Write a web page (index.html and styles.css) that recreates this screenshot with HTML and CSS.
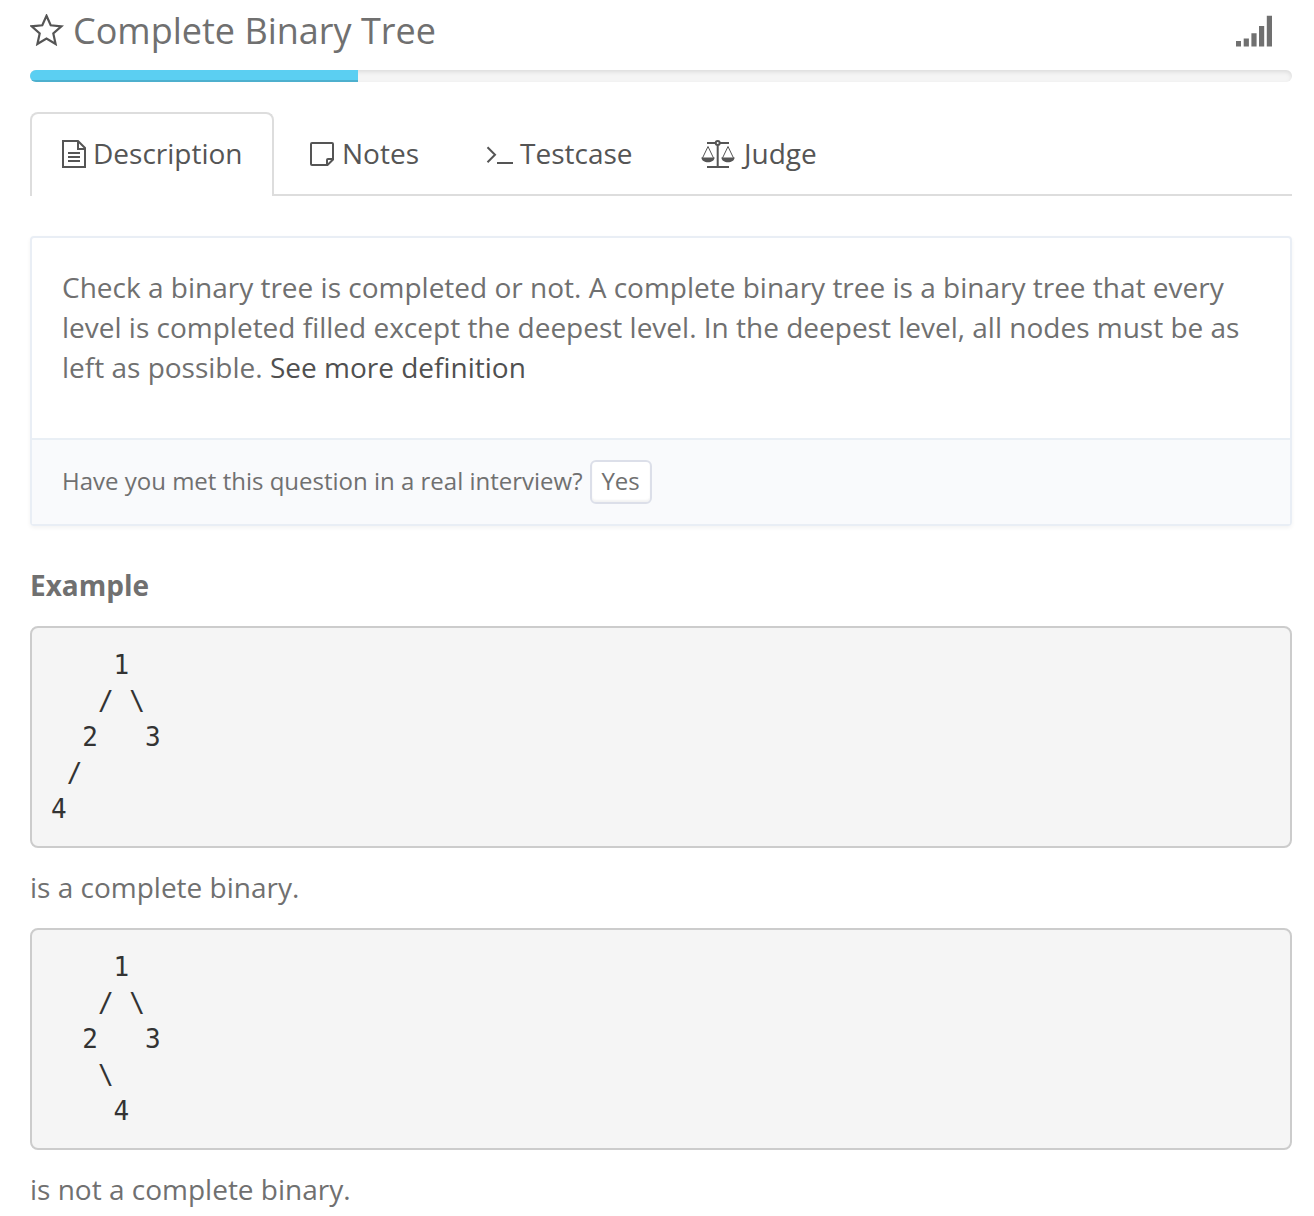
FILE: index.html
```html
<!DOCTYPE html>
<html lang="en">
<head>
<meta charset="utf-8">
<title>Complete Binary Tree</title>
<link rel="stylesheet" href="styles.css">
</head>
<body>
<main class="page">
  <header class="heading">
    <svg class="star" viewBox="0 0 34 32"><path d="M16.500 1.800 20.700 11.300 31.400 12.300 23.300 19.400 25.600 30 16.500 24.500 7.400 30 9.700 19.400 1.600 12.300 12.300 11.300Z"/></svg>
    <h1 class="title">Complete Binary Tree</h1>
    <svg class="signal" viewBox="0 0 36 32"><path d="M0 26h5v5.5H0zM7.7 23.5h5.2v8H7.7zM15.4 18.3h5.2v13.2h-5.2zM23 11h5.2v20.5H23zM30.8.7H36v30.8h-5.2z"/></svg>
  </header>
  <div class="progress"><div class="progress-bar" style="width: 26%"></div></div>

  <nav class="tabs">
    <a class="tab tab-active">
      <svg class="icon icon-doc" viewBox="0 0 24 28"><path d="M1 1H16L23 8V27H1ZM16 1V9H23M6 13H18M6 17H18M6 21H18"/></svg>
      <span class="label">Description</span>
    </a>
    <a class="tab tab-notes">
      <svg class="icon icon-note" viewBox="0 0 24 24"><path d="M2 1H22Q23 1 23 2V17.500L17.500 23H2Q1 23 1 22V2Q1 1 2 1ZM17 23V18Q17 17 18 17H23"/></svg>
      <span class="label">Notes</span>
    </a>
    <a class="tab tab-testcase">
      <svg class="icon icon-terminal" viewBox="0 0 27 18"><path d="M1.5 1.2 9 8.7 1.5 16.2M11 16.9H27"/></svg>
      <span class="label">Testcase</span>
    </a>
    <a class="tab tab-judge">
      <svg class="icon icon-scales" viewBox="0 0 34 28"><path d="M6 3H14.4M19 3H28M16.7 5.2V27M6 27H28"/><circle cx="16.7" cy="3" r="2"/><path class="thin" d="M1.5 18 7 6.5 12.500 18M21.500 18 27 6.500 32.500 18"/><path class="pan" d="M.3 17.500H13.700C13.300 20.600 10.500 22.300 7 22.300S.7 20.600.3 17.500ZM20.300 17.500H33.700C33.300 20.600 30.500 22.300 27 22.300S20.700 20.600 20.300 17.500Z"/></svg>
      <span class="label">Judge</span>
    </a>
  </nav>

  <section class="panel">
    <div class="panel-body">
      <p class="text">Check a binary tree is completed or not. A complete binary tree is a binary tree that every level is completed filled except the deepest level. In the deepest level, all nodes must be as left as possible. <a class="link">See more definition</a></p>
    </div>
    <div class="panel-footer">
      <span class="question">Have you met this question in a real interview?</span>
      <button class="button" type="button">Yes</button>
    </div>
  </section>

  <section class="example">
    <h2 class="subtitle">Example</h2>
    <pre class="code">    1
   / \
  2   3
 /
4</pre>
    <p class="text">is a complete binary.</p>
    <pre class="code">    1
   / \
  2   3
   \
    4</pre>
    <p class="text">is not a complete binary.</p>
  </section>
</main>
</body>
</html>
```

FILE: styles.css
```css
* {
  box-sizing: border-box;
}

body {
  margin: 0;
  background: #fff;
  color: #707070;
  font-family: "Open Sans", sans-serif;
  font-size: 28px;
  line-height: 40px;
}

.page {
  padding: 0 22px 0 30px;
}

.heading {
  display: flex;
  align-items: flex-start;
  height: 70px;
}

.star {
  width: 34px;
  height: 32px;
  margin-top: 14px;
  fill: none;
  stroke: #555;
  stroke-width: 2.2;
}

.title {
  flex: 1;
  margin: 6px 0 0 9px;
  font-size: 36px;
  font-weight: 400;
  line-height: 50px;
  white-space: nowrap;
}

.signal {
  width: 36px;
  height: 32px;
  margin: 15px 20px 0 0;
  fill: #707070;
}

.progress {
  height: 12px;
  overflow: hidden;
  border-radius: 6px;
  background: #f5f5f5;
  box-shadow: inset 0 2px 4px rgba(0, 0, 0, 0.1);
}

.progress-bar {
  height: 100%;
  background: #5bcff2;
  box-shadow: inset 0 -2px 0 rgba(0, 0, 0, 0.15);
}

.tabs {
  display: flex;
  height: 84px;
  margin-top: 30px;
  border-bottom: 2px solid #ddd;
  color: #555;
}

.tab {
  display: flex;
  align-items: center;
  height: 84px;
  border: 2px solid transparent;
  border-bottom: 0;
  white-space: nowrap;
}

.tab-active {
  width: 244px;
  padding-left: 30px;
  border-color: #ddd;
  border-radius: 8px 8px 0 0;
  background: #fff;
}

.tab-notes {
  width: 176px;
  padding-left: 34px;
}

.tab-testcase {
  width: 214px;
  padding-left: 34px;
}

.tab-judge {
  padding-left: 35px;
}

.icon {
  flex: none;
  fill: none;
  stroke: #555;
  stroke-width: 2;
}

.label {
  margin-top: -5px;
}

.icon-doc {
  width: 24px;
  height: 28px;
  margin: -2px 7px 0 0;
}

.icon-note {
  width: 24px;
  height: 24px;
  margin: -2px 8px 0 0;
}

.icon-terminal {
  width: 27px;
  height: 18px;
  margin: 0 7px 0 0;
}

.icon-scales {
  width: 34px;
  height: 28px;
  margin: -2px 9px 0 0;
}

.thin {
  stroke-width: 1;
}

.pan {
  fill: #555;
  stroke: none;
}

.panel {
  margin-top: 40px;
  border: 2px solid #e9eef5;
  border-radius: 4px;
  box-shadow: 0 2px 4px rgba(0, 0, 0, 0.05);
}

.panel-body {
  padding: 29px 30px 51px;
}

.text {
  margin: 0;
}

.link {
  color: #505050;
}

.panel-footer {
  display: flex;
  align-items: center;
  gap: 7px;
  height: 86px;
  padding: 0 30px;
  border-top: 2px solid #e9eff5;
  background: #f9fafc;
  font-size: 24px;
}

.question {
  margin-top: -2px;
}

.button {
  width: 62px;
  height: 44px;
  padding: 0 0 2px;
  border: 2px solid #dcdfe9;
  border-radius: 6px;
  background: #fff;
  box-shadow: inset 0 -2px 2px rgba(0, 0, 0, 0.05);
  color: #707070;
  font: 24px/36px "Open Sans", sans-serif;
}

.example {
  margin-top: 39px;
}

.subtitle {
  margin: 0;
  font-size: 28px;
  font-weight: 700;
  line-height: 40px;
}

.code {
  height: 222px;
  margin: 21px 0 19px;
  padding: 19px;
  border: 2px solid #ccc;
  border-radius: 8px;
  background: #f5f5f5;
  color: #333;
  font: 26px/36px "DejaVu Sans Mono", monospace;
}
```
